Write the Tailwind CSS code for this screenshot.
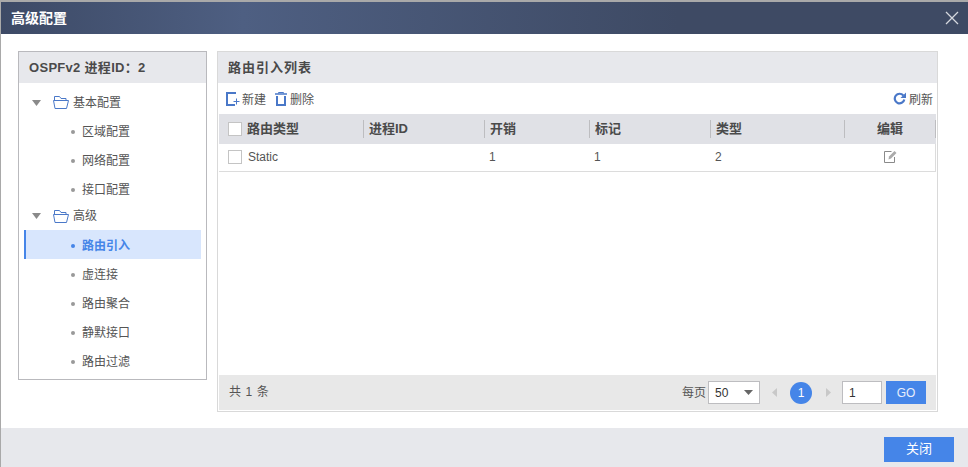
<!DOCTYPE html>
<html lang="zh">
<head>
<meta charset="UTF-8">
<title>高级配置</title>
<script src="https://cdn.jsdelivr.net/npm/@tailwindcss/browser@4"></script>
</head>
<body class="bg-white overflow-hidden font-['Liberation_Sans','Noto_Sans_CJK_SC',sans-serif] text-[12px] text-[#555]">
<div class="w-[968px] h-[467px] flex flex-col bg-[#a9a9a9] pt-[2px] pl-px">
  <!-- title -->
  <div class="h-[32px] shrink-0 flex items-center justify-between pl-[10px] pr-[9px] bg-linear-to-r from-[#3d4a66] via-[#4e5f82] via-25% to-[#3e4a64] to-70%">
    <span class="text-[14px] font-bold text-white">高级配置</span>
    <svg width="14" height="14" viewBox="0 0 14 14" fill="none" stroke="#d5d8de" stroke-width="1.3"><path d="M1 1l12 12M13 1L1 13"/></svg>
  </div>

  <div class="flex-1 bg-white flex gap-[10px] pl-[17px] pt-[17px]">
    <!-- tree -->
    <div class="w-[189px] h-[329px] border border-[#b9b9bd]">
      <div class="h-[31px] bg-[#e7e8ec] flex items-center pl-[10px] text-[13px] font-bold text-[#4a4a4a] tracking-[.3px]">OSPFv2 进程ID：2</div>
      <div class="pt-[5px] pl-[5px] pr-[5px]">
        <div class="h-[29px] flex items-center pl-[8px]">
          <svg width="9" height="6" viewBox="0 0 9 6" class="mr-[12px]"><path d="M0 0h9L4.500 6z" fill="#8a8a8a"/></svg>
          <svg width="16" height="13" viewBox="0 0 16 13" fill="none" stroke="#4a78c8" class="mr-[4px]"><path d="M1.500 5V.5h5l1.500 2h5V5"/><path d="M.5 4.500h15l-2 8H2z"/></svg>
          <span>基本配置</span>
        </div>
        <div class="h-[29px] flex items-center pl-[47px]"><i class="size-[4px] rounded-full bg-[#999] mr-[7px]"></i>区域配置</div>
        <div class="h-[29px] flex items-center pl-[47px]"><i class="size-[4px] rounded-full bg-[#999] mr-[7px]"></i>网络配置</div>
        <div class="h-[29px] flex items-center pl-[47px]"><i class="size-[4px] rounded-full bg-[#999] mr-[7px]"></i>接口配置</div>
        <div class="h-[26px] pb-[2px] flex items-center pl-[8px]">
          <svg width="9" height="6" viewBox="0 0 9 6" class="mr-[12px]"><path d="M0 0h9L4.500 6z" fill="#8a8a8a"/></svg>
          <svg width="16" height="13" viewBox="0 0 16 13" fill="none" stroke="#4a78c8" class="mr-[4px]"><path d="M1.500 5V.5h5l1.500 2h5V5"/><path d="M.5 4.500h15l-2 8H2z"/></svg>
          <span>高级</span>
        </div>
        <div class="h-[29px] pt-[2px] flex items-center pl-[45px] bg-[#d8e6fd] border-l-2 border-[#4585e8] font-bold text-[#4585e8]"><i class="size-[4px] rounded-full bg-[#4585e8] mr-[7px]"></i>路由引入</div>
        <div class="h-[29px] pt-[2px] flex items-center pl-[47px]"><i class="size-[4px] rounded-full bg-[#999] mr-[7px]"></i>虚连接</div>
        <div class="h-[29px] pt-[2px] flex items-center pl-[47px]"><i class="size-[4px] rounded-full bg-[#999] mr-[7px]"></i>路由聚合</div>
        <div class="h-[29px] pt-[2px] flex items-center pl-[47px]"><i class="size-[4px] rounded-full bg-[#999] mr-[7px]"></i>静默接口</div>
        <div class="h-[29px] pt-[2px] flex items-center pl-[47px]"><i class="size-[4px] rounded-full bg-[#999] mr-[7px]"></i>路由过滤</div>
      </div>
    </div>

    <!-- list -->
    <div class="w-[721px] h-[361px] border border-[#d9d9d9] flex flex-col">
      <div class="h-[31px] shrink-0 bg-[#e7e8ec] flex items-center pl-[10px] text-[13px] font-bold text-[#4a4a4a] tracking-[1px]">路由引入列表</div>
      <div class="h-[31px] shrink-0 flex items-center pl-[8px] pr-[4px] pt-[2px]">
        <svg width="14" height="14" viewBox="0 0 14 14" fill="none" class="mr-[2px] mb-[2px]"><path d="M10 1H1v12h8" stroke="#4a78c8" stroke-width="2"/><path d="M10.500 6.500v6M7.500 9.500h6" stroke="#4a78c8"/></svg>
        <span>新建</span>
        <svg width="12" height="14" viewBox="0 0 12 14" fill="none" stroke="#4a78c8" class="ml-[9px] mr-[3px] mb-[2px]"><path d="M0 2h12" stroke-width="1.500"/><path d="M3.500 1.500V.5h5v1"/><path d="M2 4v9h8V4" stroke-width="2"/></svg>
        <span>删除</span>
        <svg width="13" height="13" viewBox="0 0 13 13" fill="none" class="ml-auto mr-[3px] mb-[2px]"><path d="M10.300 3.500A4.800 4.800 0 1 0 11.300 7.500" stroke="#4a78c8" stroke-width="2.200"/><path d="M13 .5v5.500H7.500z" fill="#4a78c8"/></svg>
        <span>刷新</span>
      </div>
      <div class="mx-px">
        <div class="grid grid-cols-[145px_121px_105px_121px_134px_91px] h-[30px] bg-[#e0e1e6] text-[13px] font-bold text-[#4a4a4a] items-center">
          <div class="h-[18px] flex items-center border-r border-[#bdbdc0] pl-[9px]"><i class="size-[14px] bg-white border border-[#c4c4c4] mr-[5px]"></i>路由类型</div>
          <div class="h-[18px] flex items-center border-r border-[#bdbdc0] pl-[5px]">进程ID</div>
          <div class="h-[18px] flex items-center border-r border-[#bdbdc0] pl-[5px]">开销</div>
          <div class="h-[18px] flex items-center border-r border-[#bdbdc0] pl-[5px]">标记</div>
          <div class="h-[18px] flex items-center border-r border-[#bdbdc0] pl-[5px]">类型</div>
          <div class="h-[18px] flex items-center justify-center border-r border-[#bdbdc0]">编辑</div>
        </div>
        <div class="grid grid-cols-[145px_121px_105px_121px_134px_91px] h-[28px] pb-[2px] items-center border-b border-r border-[#dcdcdc]">
          <div class="flex items-center pl-[9px]"><i class="size-[14px] bg-white border border-[#c4c4c4] mr-[6px]"></i>Static</div>
          <div></div>
          <div class="pl-[4px]">1</div>
          <div class="pl-[4px]">1</div>
          <div class="pl-[4px]">2</div>
          <div class="flex justify-center">
            <svg width="13" height="13" viewBox="0 0 13 13" fill="none" stroke="#8a8a8a"><path d="M10.500 7v5.500H.5V1.500h7"/><path d="M4.500 9.500l.5-3 5.500-5.500 2 2L7 8.500z" fill="#aaa" stroke="none"/></svg>
          </div>
        </div>
      </div>
      <div class="mt-auto mb-px mx-px h-[35px] shrink-0 bg-[#e8e8e8] flex items-center pl-[10px] pr-[10px]">
        <span class="tracking-[.6px] pb-[2px]">共 1 条</span>
        <span class="ml-auto mr-[2px]">每页</span>
        <div class="w-[52px] h-[23px] bg-white border border-[#bdbdc0] flex items-center justify-between pl-[6px] pr-[6px] text-[#333]">50<svg width="9" height="5" viewBox="0 0 9 5"><path d="M0 0h9L4.500 5z" fill="#666"/></svg></div>
        <svg width="5" height="9" viewBox="0 0 5 9" class="ml-[12px]"><path d="M5 0v9L0 4.500z" fill="#c8c8c8"/></svg>
        <div class="ml-[13px] size-[22px] rounded-full bg-[#4585e8] text-white flex items-center justify-center">1</div>
        <svg width="5" height="9" viewBox="0 0 5 9" class="ml-[14px]"><path d="M0 0v9l5-4.500z" fill="#c8c8c8"/></svg>
        <div class="ml-[11px] w-[40px] h-[23px] bg-white border border-[#bdbdc0] flex items-center pl-[6px] text-[#333]">1</div>
        <div class="ml-[4px] w-[40px] h-[23px] bg-[#4585e8] text-[#e8eefb] flex items-center justify-center">GO</div>
      </div>
    </div>
  </div>

  <div class="h-[39px] shrink-0 bg-[#e7e8ec] flex items-center justify-end pr-[14px] pt-[3px]">
    <div class="w-[70px] h-[25px] bg-[#4585e8] text-white text-[13px] flex items-center justify-center">关闭</div>
  </div>
</div>
</body>
</html>
